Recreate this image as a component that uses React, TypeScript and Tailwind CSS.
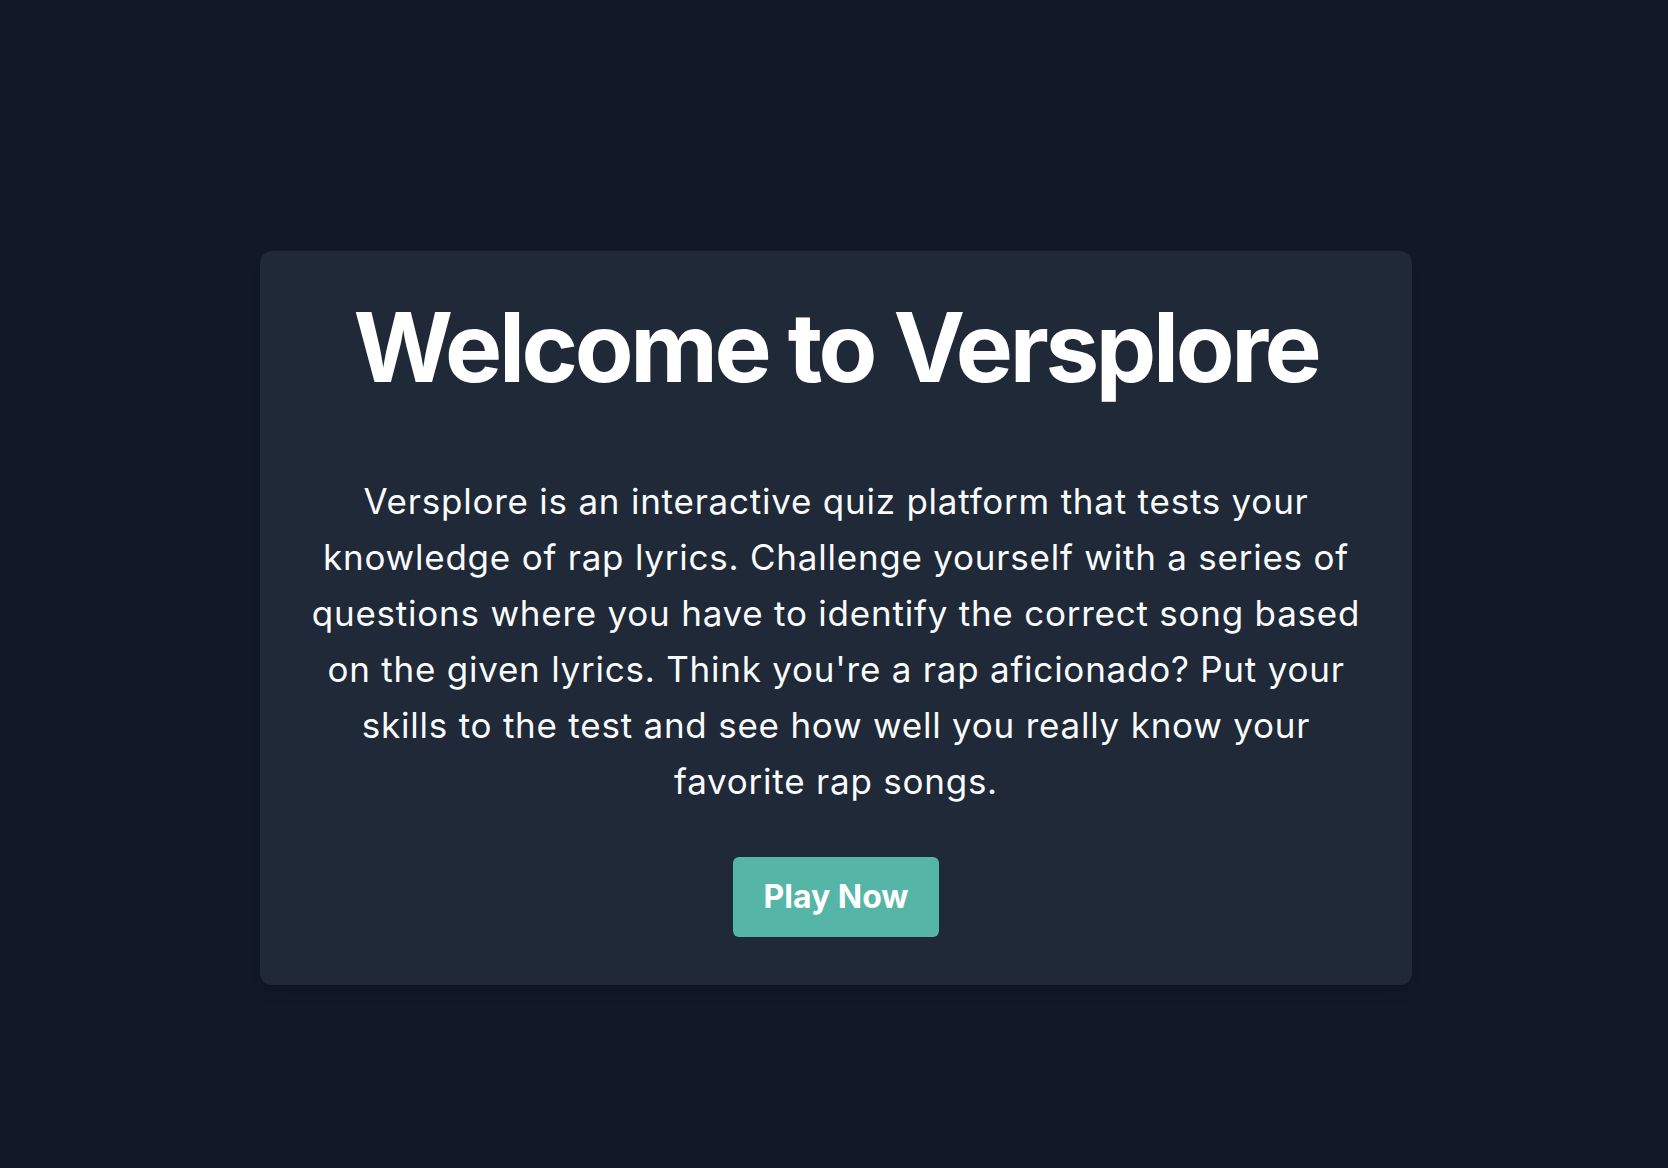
export default function App() {
  return (
    <div
      className="min-h-screen bg-[#111827] flex items-center justify-center pt-[68px] pl-1"
      style={{ fontFamily: "Inter, 'Noto Sans', sans-serif" }}
    >
      <div className="w-full max-w-6xl bg-[#1f2937] rounded-xl shadow-lg p-12 flex flex-col items-center text-center">
        <h1 className="text-8xl font-bold text-white leading-none tracking-[-0.035em]">Welcome to Versplore</h1>
        <p className="mt-[78px] text-[35px] leading-[56px] tracking-[0.022em] text-gray-50">
          Versplore is an interactive quiz platform that tests your knowledge of rap lyrics. Challenge yourself with a
          series of questions where you have to identify the correct song based on the given lyrics. Think you're a
          rap aficionado? Put your skills to the test and see how well you really know your favorite rap songs.
        </p>
        <button className="mt-12 w-[206px] h-[80px] rounded-md bg-[#55b6a8] text-white text-[32px] font-bold flex items-center justify-center">
          Play Now
        </button>
      </div>
    </div>
  );
}
